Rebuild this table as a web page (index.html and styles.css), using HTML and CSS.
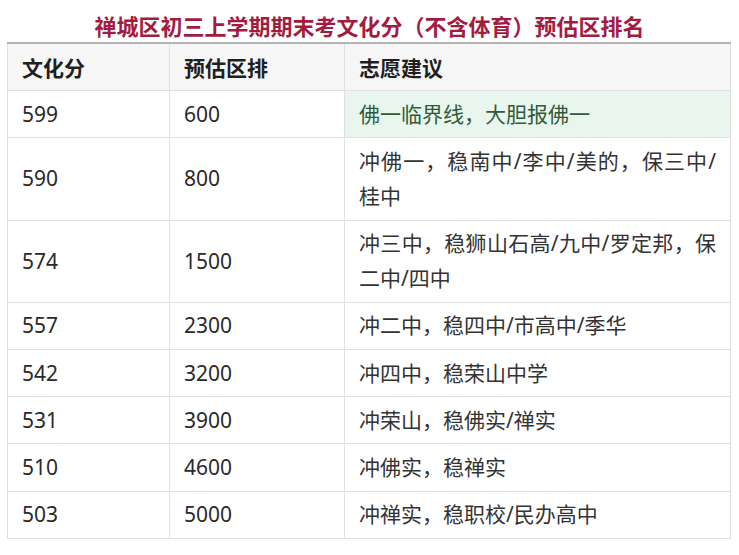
FILE: index.html
```html
<!DOCTYPE html>
<html lang="zh-CN">
<head>
<meta charset="utf-8">
<title>禅城区初三上学期期末考文化分预估区排名</title>
<link rel="stylesheet" href="styles.css">
</head>
<body>
<h1 class="title">禅城区初三上学期期末考文化分（不含体育）预估区排名</h1>
<table class="rank">
  <colgroup>
    <col class="c1"><col class="c2"><col class="c3">
  </colgroup>
  <thead>
    <tr><th>文化分</th><th>预估区排</th><th>志愿建议</th></tr>
  </thead>
  <tbody>
    <tr><td>599</td><td>600</td><td class="hl">佛一临界线，大胆报佛一</td></tr>
    <tr><td>590</td><td>800</td><td><span class="jl">冲佛一，稳南中/李中/美的，保三中/</span>桂中</td></tr>
    <tr><td>574</td><td>1500</td><td><span class="jl">冲三中，稳狮山石高/九中/罗定邦，保</span>二中/四中</td></tr>
    <tr><td>557</td><td>2300</td><td>冲二中，稳四中/市高中/季华</td></tr>
    <tr><td>542</td><td>3200</td><td>冲四中，稳荣山中学</td></tr>
    <tr><td>531</td><td>3900</td><td>冲荣山，稳佛实/禅实</td></tr>
    <tr><td>510</td><td>4600</td><td>冲佛实，稳禅实</td></tr>
    <tr><td>503</td><td>5000</td><td>冲禅实，稳职校/民办高中</td></tr>
  </tbody>
</table>
</body>
</html>
```
FILE: styles.css
```css
html, body {
  margin: 0;
  padding: 0;
  background: #ffffff;
}
body {
  font-family: "Noto Sans", "Noto Sans CJK SC", sans-serif;
  color: #222222;
}
.title {
  margin: 8px 0 0;
  height: 34px;
  line-height: 34px;
  font-size: 22px;
  font-weight: 700;
  text-align: center;
  color: #a31c3f;
  font-family: "Noto Sans CJK SC", sans-serif;
}
.rank {
  margin: 0 9px 0 7px;
  width: 723px;
  border-collapse: collapse;
  table-layout: fixed;
  font-size: 21px;
  border-top: 2px solid #b4b4b4;
}
.c1 { width: 162px; }
.c2 { width: 175px; }
.c3 { width: 386px; }
.rank th,
.rank td {
  border: 1px solid #e0e0e0;
  padding: 5.6px 14px 5.6px 14px;
  line-height: 35px;
  text-align: left;
  vertical-align: middle;
}
.rank thead th {
  border-top: none;
  background: #f6f6f6;
  font-weight: 700;
  color: #1f1f1f;
  font-family: "Noto Sans CJK SC", sans-serif;
}
.rank td {
  color: #2a2a2a;
}
.rank td:nth-child(3) {
  color: #333333;
  text-align: justify;
}
.rank td.hl {
  background: #e8f6ed;
  color: #2f5a3b;
}
.jl {
  display: block;
  text-align: justify;
  text-align-last: justify;
}
```
